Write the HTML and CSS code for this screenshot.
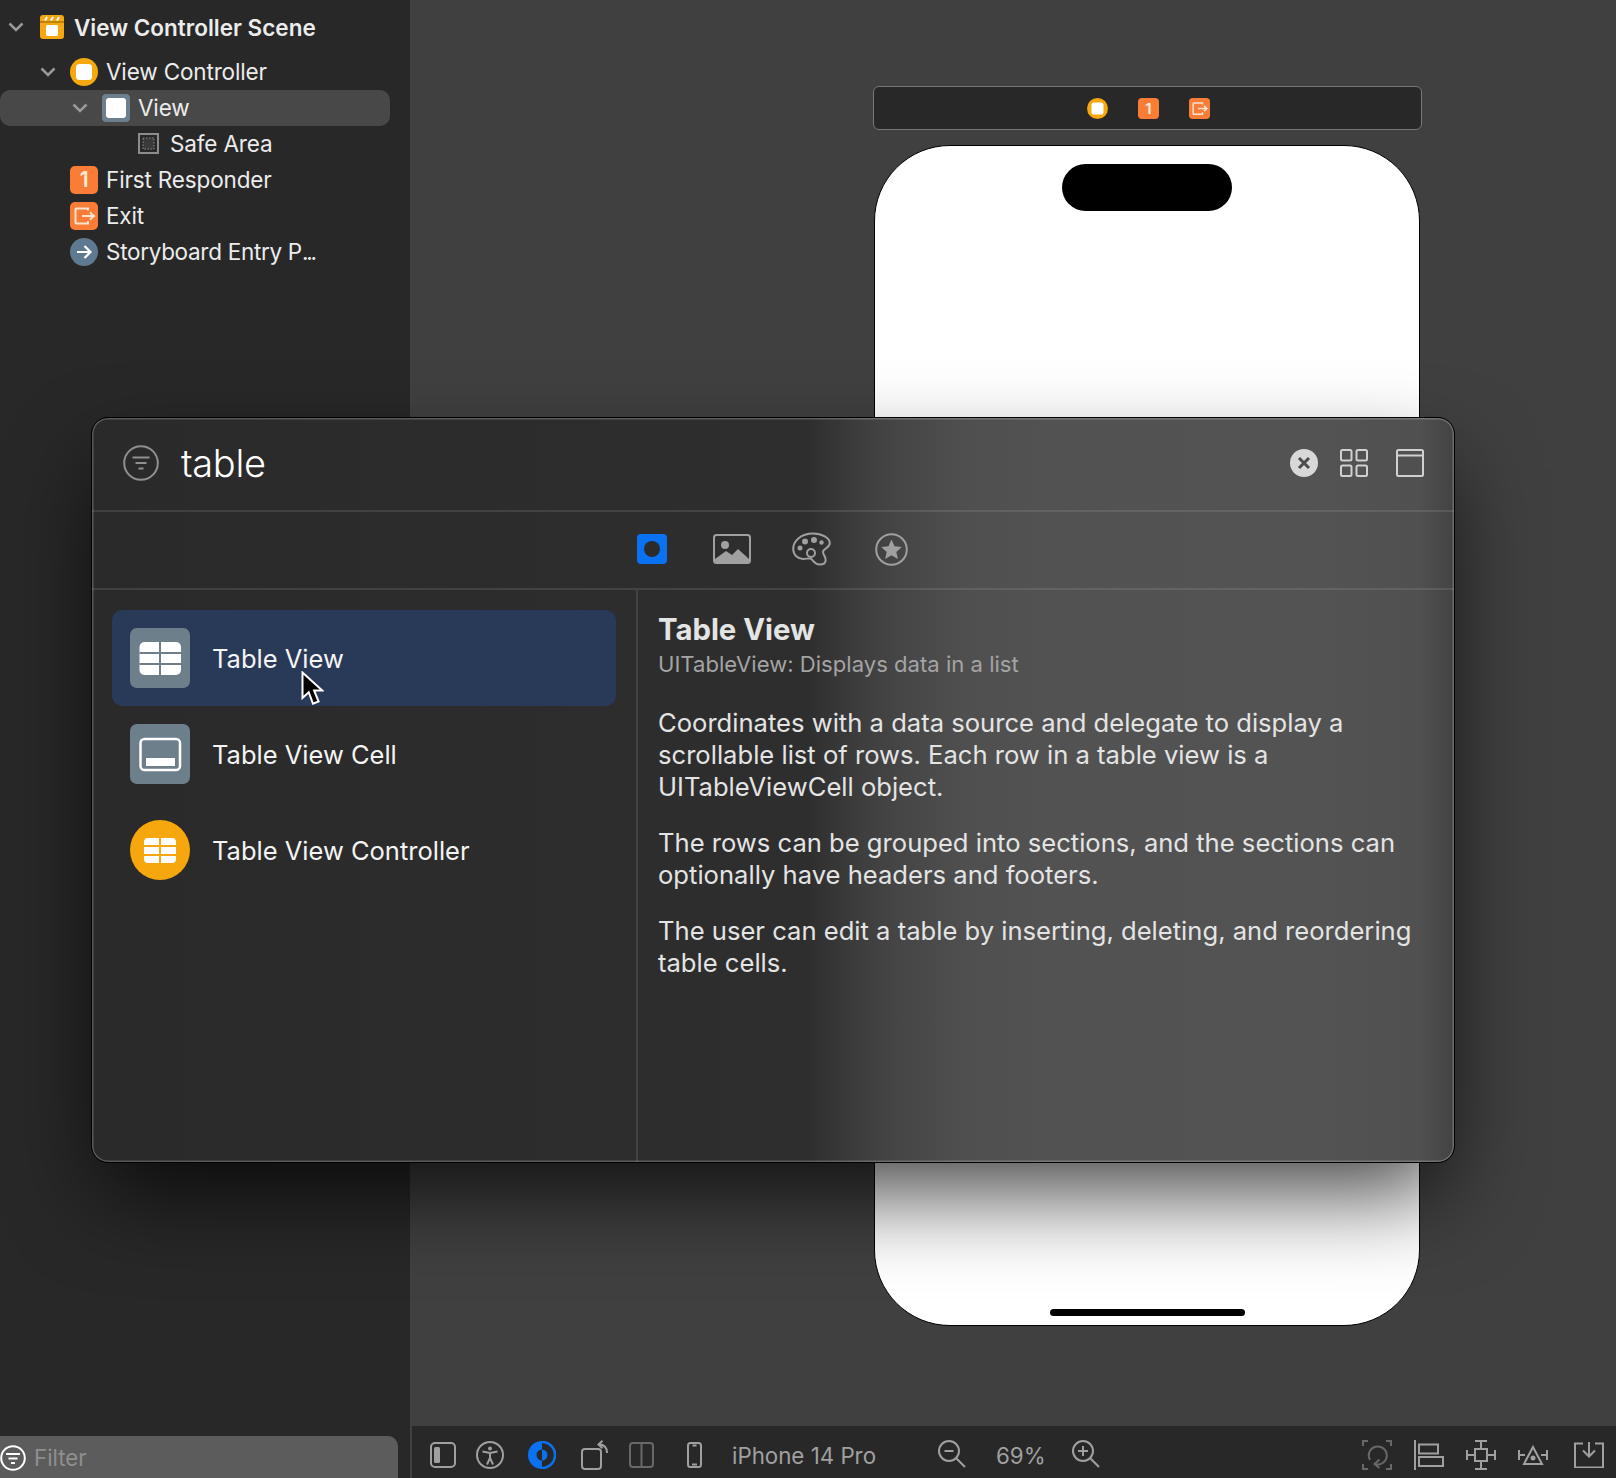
FILE: index.html
```html
<!DOCTYPE html>
<html lang="en">
<head>
    <meta charset="UTF-8">
    <title>Storyboard Library</title>
    <link rel="stylesheet" href="styles.css">
</head>
<body>
    <svg class="defs" width="0" height="0">
        <symbol id="vc" viewBox="0 0 28 28">
            <circle cx="14" cy="14" r="14" fill="#f5a80f"/>
            <rect x="6" y="6" width="16" height="16" rx="3.5" fill="#fff"/>
        </symbol>
        <symbol id="exit" viewBox="0 0 28 28">
            <rect width="28" height="28" rx="5" fill="#f97d36"/>
            <path d="M18 8.5V6.5H6.5a1 1 0 0 0-1 1v13a1 1 0 0 0 1 1H18v-2.500" fill="none" stroke="#fde3d2" stroke-width="2"/>
            <path d="M12 14h12M20 10.500l4 3.500-4 3.500" fill="none" stroke="#fde3d2" stroke-width="2"/>
        </symbol>
    </svg>

    <div class="page">
        <aside class="sidebar">
            <div class="tree">
                <div class="row row-scene">
                    <svg class="chev" viewBox="0 0 16 10"><path d="M1.500 1.500 8 8l6.500-6.500"/></svg>
                    <svg class="ico-scene" viewBox="0 0 24 24">
                        <rect width="24" height="24" rx="3" fill="#f5a80f"/>
                        <path d="M0 7h24" stroke="#8a5c00" stroke-width="1"/>
                        <path d="M5 5.500 7 2M11 5.500 13 2M17 5.500 19 2" stroke="#fff" stroke-width="2"/>
                        <rect x="6" y="10" width="12" height="11" rx="1.500" fill="#fff"/>
                    </svg>
                    <span class="scene-name">View Controller Scene</span>
                </div>
                <div class="row row-vc">
                    <svg class="chev" viewBox="0 0 16 10"><path d="M1.500 1.500 8 8l6.500-6.500"/></svg>
                    <svg class="ico"><use href="#vc"/></svg>
                    <span>View Controller</span>
                </div>
                <div class="row row-view selected">
                    <svg class="chev" viewBox="0 0 16 10"><path d="M1.500 1.500 8 8l6.500-6.500"/></svg>
                    <svg class="ico" viewBox="0 0 28 28">
                        <rect width="28" height="28" rx="4" fill="#6b7f8f"/>
                        <rect x="4" y="4" width="20" height="20" rx="3" fill="#fff"/>
                    </svg>
                    <span>View</span>
                </div>
                <div class="row row-safe">
                    <svg class="ico-safe" viewBox="0 0 21 21">
                        <rect x="1" y="1" width="19" height="19" fill="none" stroke="#8c8c8c" stroke-width="2"/>
                        <rect x="5" y="5" width="11" height="11" fill="#3a3a3a" stroke="#8c8c8c" stroke-dasharray="1.500 1.500"/>
                    </svg>
                    <span>Safe Area</span>
                </div>
                <div class="row row-top">
                    <div class="badge-one">1</div>
                    <span>First Responder</span>
                </div>
                <div class="row row-top">
                    <svg class="ico"><use href="#exit"/></svg>
                    <span>Exit</span>
                </div>
                <div class="row row-top">
                    <svg class="ico" viewBox="0 0 28 28">
                        <circle cx="14" cy="14" r="14" fill="#5f7a90"/>
                        <path d="M7 14h13M14.500 8l6 6-6 6" fill="none" stroke="#fff" stroke-width="2.200"/>
                    </svg>
                    <span class="entry-name">Storyboard Entry P<span class="dots">...</span></span>
                </div>
            </div>
            <div class="filter">
                <svg class="filter-ico" viewBox="0 0 26 26">
                    <circle cx="13" cy="13" r="11.800" fill="none" stroke="#fff" stroke-width="2"/>
                    <path d="M6 9h14M8.500 13.500h9M11 18h4" stroke="#fff" stroke-width="2"/>
                </svg>
                <span>Filter</span>
            </div>
        </aside>

        <main class="canvas">
            <div class="scene">
                <div class="scene-bar">
                    <svg class="mini"><use href="#vc"/></svg>
                    <div class="badge-one mini-one">1</div>
                    <svg class="mini"><use href="#exit"/></svg>
                </div>
                <div class="phone">
                    <div class="island"></div>
                    <div class="home-bar"></div>
                </div>
            </div>

            <div class="toolbar">
                <svg class="tool t-panel" viewBox="0 0 26 26">
                    <rect x="1" y="1" width="24" height="24" rx="4"/>
                    <rect class="fill" x="4" y="5" width="6" height="16" rx="1.500"/>
                </svg>
                <svg class="tool t-access" viewBox="0 0 28 28">
                    <circle cx="14" cy="14" r="13"/>
                    <circle class="fill" cx="14" cy="7.500" r="2"/>
                    <path d="M6.500 10.500 14 12l7.500-1.500M14 12v5M14 17l-3 6.500M14 17l3 6.500"/>
                </svg>
                <svg class="tool t-appear" viewBox="0 0 28 28">
                    <circle cx="14" cy="14" r="14" fill="#0a72f0" stroke="none"/>
                    <path d="M14 1a13 13 0 0 1 0 26z" fill="#282828" stroke="none"/>
                    <path d="M14 1a13 13 0 0 1 13 13 13 13 0 0 1-13 13" fill="none" stroke="#0a72f0" stroke-width="2.500"/>
                    <path d="M14 8.500a5.500 5.500 0 0 1 0 11z" fill="#0a72f0" stroke="none"/>
                    <path d="M14 8.500a5.500 5.500 0 0 0 0 11z" fill="#282828" stroke="none"/>
                </svg>
                <svg class="tool t-rotate" viewBox="0 0 27 30">
                    <rect x="1" y="9" width="19" height="20" rx="3"/>
                    <path d="M26 13C26 7 23 4.500 18 4.500M21.500 0.800 17.500 4.500l4 3.700"/>
                </svg>
                <svg class="tool t-split dim" viewBox="0 0 25 26">
                    <rect x="1" y="1" width="23" height="24" rx="3"/>
                    <path d="M12.500 1v24"/>
                </svg>
                <svg class="tool t-phone" viewBox="0 0 15 26">
                    <rect x="1" y="1" width="13" height="24" rx="2.500"/>
                    <path d="M5.500 3.500h4M5 22.500h5"/>
                </svg>
                <span class="tool-text t-device">iPhone 14 Pro</span>
                <svg class="tool t-zoomout" viewBox="0 0 28 28">
                    <circle cx="11" cy="11" r="10"/>
                    <path d="M18.500 18.500 27 27M6.500 11h9"/>
                </svg>
                <span class="tool-text t-percent">69%</span>
                <svg class="tool t-zoomin" viewBox="0 0 28 28">
                    <circle cx="11" cy="11" r="10"/>
                    <path d="M18.500 18.500 27 27M6 11h10M11 6v10"/>
                </svg>
                <div class="tool-right">
                    <svg class="tool dim" viewBox="0 0 30 30">
                        <path d="M1 6V1h5M24 1h5v5M1 24v5h5M29 24v5h-5"/>
                        <path d="M8 20A9 9 0 1 1 13 24M17.500 19.500 12.500 24l5 4"/>
                    </svg>
                    <svg class="tool" viewBox="0 0 30 30">
                        <path d="M1 0v30"/>
                        <rect x="5" y="4.500" width="19" height="9"/>
                        <rect x="5" y="17" width="24" height="9"/>
                    </svg>
                    <svg class="tool" viewBox="0 0 30 30">
                        <rect x="9" y="9" width="12" height="12"/>
                        <path d="M9 1h12M15 1v8M9 29h12M15 21v8M1 10v10M1 15h8M29 10v10M21 15h8"/>
                    </svg>
                    <svg class="tool" viewBox="0 0 30 30">
                        <path d="M15 7 24 24H6zM1 10v10M1 15h6M29 10v10M23 15h6"/>
                        <circle class="fill" cx="15" cy="18" r="2.500"/>
                    </svg>
                    <svg class="tool t-embed" viewBox="0 0 30 26">
                        <path d="M9 1.500H1v24h28v-24h-8M15 0v14M9 8.500l6 6 6-6"/>
                    </svg>
                </div>
            </div>
        </main>

        <!-- object library popup -->
        <section class="library">
            <header class="lib-search">
                <svg class="lib-filter" viewBox="0 0 36 36">
                    <circle cx="18" cy="18" r="16.800"/>
                    <path d="M9.500 12.500h17M12.500 18h11M15.500 23.500h5"/>
                </svg>
                <span class="lib-query">table</span>
                <svg class="lib-clear" viewBox="0 0 28 28">
                    <circle cx="14" cy="14" r="14" fill="#d8d8d8"/>
                    <path d="M9 9l10 10M19 9 9 19" stroke="#4c4c4c" stroke-width="3"/>
                </svg>
                <svg class="lib-view" viewBox="0 0 28 28">
                    <rect x="1" y="1" width="10.500" height="10.500" rx="1.500"/>
                    <rect x="16.500" y="1" width="10.500" height="10.500" rx="1.500"/>
                    <rect x="1" y="16.500" width="10.500" height="10.500" rx="1.500"/>
                    <rect x="16.500" y="16.500" width="10.500" height="10.500" rx="1.500"/>
                </svg>
                <svg class="lib-window" viewBox="0 0 28 28">
                    <rect x="1" y="1" width="26" height="26" rx="1.500"/>
                    <path d="M1 6.500h26"/>
                </svg>
            </header>

            <nav class="lib-tabs">
                <svg class="tab-objects" viewBox="0 0 30 30">
                    <rect width="30" height="30" rx="4" fill="#0a72f0"/>
                    <circle cx="15" cy="15" r="8" fill="#2b2b2b"/>
                </svg>
                <svg class="tab-media" viewBox="0 0 38 30">
                    <rect x="1" y="1" width="36" height="28" rx="2.500" fill="none" stroke="#a0a0a0" stroke-width="2"/>
                    <circle cx="12" cy="11" r="4" fill="#a0a0a0"/>
                    <path d="M2 28V25L13 17l6 4 6-6 11 10v3z" fill="#a0a0a0"/>
                </svg>
                <svg class="tab-colors" viewBox="0 0 40 34">
                    <path d="M21 1.500C9 1.500 1.200 9 1.200 17c0 6 4.800 10 10 10 3 0 5-1 7-.5 3 .6 3.500 6 9.500 6 3.500 0 6-1.500 6-4.500 0-4-2.700-5-2.700-8 0-4 6.800-3.500 6.800-9C37.800 6 30 1.500 21 1.500z" fill="none" stroke="#a0a0a0" stroke-width="2"/>
                    <circle cx="8" cy="16" r="2.500" fill="#a0a0a0"/>
                    <circle cx="13" cy="9.500" r="3" fill="#a0a0a0"/>
                    <circle cx="22" cy="8" r="3" fill="#a0a0a0"/>
                    <circle cx="29.500" cy="10.500" r="2.200" fill="#a0a0a0"/>
                    <circle cx="19" cy="21" r="4" fill="none" stroke="#a0a0a0" stroke-width="2"/>
                </svg>
                <svg class="tab-snippets" viewBox="0 0 33 33">
                    <circle cx="16.500" cy="16.500" r="15.300" fill="none" stroke="#a0a0a0" stroke-width="2"/>
                    <path d="M16.500 6.500l3 6.800 7.300.7-5.500 4.900 1.600 7.200-6.400-3.800-6.400 3.800 1.600-7.200-5.500-4.900 7.300-.7z" fill="#a0a0a0"/>
                </svg>
            </nav>

            <div class="lib-body">
                <div class="lib-list">
                    <div class="lib-item active">
                        <svg class="lib-ico" viewBox="0 0 60 60">
                            <rect width="60" height="60" rx="7" fill="#6e7f8c"/>
                            <rect x="9.500" y="14" width="41.500" height="33" rx="5" fill="#fff"/>
                            <path d="M30 14v33M9.500 25h41.500M9.500 36h41.500" stroke="#6e7f8c" stroke-width="2"/>
                        </svg>
                        <span>Table View</span>
                    </div>
                    <div class="lib-item">
                        <svg class="lib-ico" viewBox="0 0 60 60">
                            <rect width="60" height="60" rx="7" fill="#6e7f8c"/>
                            <rect x="10.500" y="15" width="39.500" height="31" rx="4" fill="none" stroke="#fff" stroke-width="2.500"/>
                            <rect x="16" y="34" width="29" height="8" fill="#fff"/>
                        </svg>
                        <span>Table View Cell</span>
                    </div>
                    <div class="lib-item">
                        <svg class="lib-ico" viewBox="0 0 60 60">
                            <circle cx="30" cy="30" r="30" fill="#f7a70e"/>
                            <rect x="14" y="18" width="32" height="25" rx="4" fill="#fff"/>
                            <path d="M30 18v25M14 26h32M14 35h32" stroke="#f7a70e" stroke-width="2"/>
                        </svg>
                        <span>Table View Controller</span>
                    </div>
                </div>
                <div class="lib-detail">
                    <h2>Table View</h2>
                    <div class="lib-sub">UITableView: Displays data in a list</div>
                    <p>Coordinates with a data source and delegate to display a scrollable list of rows. Each row in a table view is a UITableViewCell object.</p>
                    <p>The rows can be grouped into sections, and the sections can optionally have headers and footers.</p>
                    <p>The user can edit a table by inserting, deleting, and reordering table cells.</p>
                </div>
            </div>
        </section>

        <svg class="cursor" viewBox="0 0 23 36">
            <path d="M1.500 1.500V27l6.200-5.800 4.300 11.500 5.600-2.200-4.500-11h8.200z" fill="#000" stroke="#fff" stroke-width="2"/>
        </svg>
    </div>
</body>
</html>
```

FILE: styles.css
```css
* {
    box-sizing: border-box;
}
html, body {
    margin: 0;
    height: 100%;
}
body {
    font-family: Inter, "Liberation Sans", sans-serif;
    background: #404040;
    color: #ececec;
    overflow: hidden;
}
.defs {
    position: absolute;
}
.page {
    position: relative;
    display: flex;
    width: 1616px;
    height: 1478px;
    overflow: hidden;
}

/* left outline */
.sidebar {
    width: 410px;
    height: 100%;
    background: #282828;
    display: flex;
    flex-direction: column;
    flex-shrink: 0;
}
.tree {
    padding-top: 10px;
    flex: 1;
    font-size: 22.5px;
    letter-spacing: -0.15px;
}
.row {
    display: flex;
    align-items: center;
    height: 36px;
}
.row-scene {
    padding-left: 8px;
    margin-bottom: 7.5px;
    position: relative;
    top: -1px;
}
.row-vc {
    padding-left: 40px;
}
.row-view {
    padding-left: 72px;
}
.row-safe {
    padding-left: 138px;
}
.row-top {
    padding-left: 70px;
}
.selected {
    width: 390px;
    background: #484848;
    border-radius: 10px;
}
.chev {
    width: 16px;
    height: 10px;
    margin-right: 14px;
    fill: none;
    stroke: #9a9a9a;
    stroke-width: 2.500;
}
.row-scene .chev {
    margin-right: 16px;
}
.ico-scene {
    width: 24px;
    height: 24px;
    margin-right: 10px;
}
.scene-name {
    font-weight: 600;
    letter-spacing: 0;
}
.ico {
    width: 28px;
    height: 28px;
    margin-right: 8px;
}
.ico-safe {
    width: 21px;
    height: 21px;
    margin-right: 11px;
}
.entry-name {
    letter-spacing: -0.3px;
}
.dots {
    letter-spacing: -2.2px;
}
.badge-one {
    width: 28px;
    height: 28px;
    margin-right: 8px;
    background: #f97d36;
    border-radius: 5px;
    color: #fde9dc;
    font-size: 21px;
    font-weight: 600;
    line-height: 28px;
    text-align: center;
}
.filter {
    height: 42px;
    width: 398px;
    background: #5c5c5c;
    border-radius: 0 10px 0 0;
    display: flex;
    align-items: center;
    padding-top: 1px;
    color: #8f8f8f;
    font-size: 22.3px;
}
.filter-ico {
    width: 26px;
    height: 26px;
    margin-right: 8px;
}

/* canvas */
.canvas {
    flex: 1;
    display: flex;
    flex-direction: column;
    height: 100%;
}
.scene {
    margin: 86px 0 0 463px;
    width: 549px;
}
.scene-bar {
    height: 44px;
    background: #282828;
    border: 1.500px solid #787878;
    border-radius: 6px;
    display: flex;
    align-items: center;
    justify-content: center;
    gap: 30px;
    padding-left: 2px;
    margin-bottom: 15px;
}
.mini {
    width: 21px;
    height: 21px;
}
.mini-one {
    width: 21px;
    height: 21px;
    margin: 0;
    font-size: 15px;
    line-height: 21px;
    border-radius: 4px;
}
.phone {
    position: relative;
    margin-left: 1px;
    width: 546px;
    height: 1181px;
    background: #fff;
    border: 1.500px solid #000;
    border-radius: 76px;
}
.island {
    width: 170px;
    height: 47px;
    margin: 18px auto 0;
    background: #000;
    border-radius: 24px;
}
.home-bar {
    position: absolute;
    left: 175px;
    bottom: 9px;
    width: 195px;
    height: 7px;
    background: #000;
    border-radius: 4px;
}
.toolbar {
    margin-top: auto;
    margin-left: 2px;
    height: 52px;
    background: #282828;
    display: flex;
    align-items: center;
    padding: 6px 12px 0 18px;
}
.tool {
    width: 30px;
    height: 30px;
    fill: none;
    stroke: #a0a0a0;
    stroke-width: 2;
    flex-shrink: 0;
}
.tool .fill {
    fill: #a0a0a0;
    stroke: none;
}
.tool.dim {
    stroke: #686868;
}
.tool-text {
    color: #a0a0a0;
    font-size: 22.3px;
}
.t-panel {
    width: 26px;
    height: 26px;
}
.t-access {
    width: 28px;
    height: 28px;
    margin-left: 20px;
}
.t-appear {
    width: 28px;
    height: 28px;
    margin-left: 24px;
}
.t-rotate {
    width: 27px;
    margin-left: 25px;
}
.t-split {
    width: 25px;
    height: 26px;
    margin-left: 21px;
}
.t-phone {
    width: 15px;
    height: 26px;
    margin-left: 33px;
}
.t-device {
    margin-left: 30px;
    width: 144px;
    white-space: nowrap;
}
.t-zoomout {
    width: 28px;
    height: 28px;
    margin-left: 62px;
    margin-top: -2px;
}
.t-percent {
    margin-left: 30px;
    width: 48px;
}
.t-zoomin {
    width: 28px;
    height: 28px;
    margin-left: 28px;
    margin-top: -2px;
}
.tool-right {
    margin-left: auto;
    display: flex;
    gap: 22px;
}
.t-embed {
    margin-left: 4px;
    height: 26px;
    align-self: center;
}

/* library popup */
.library {
    position: absolute;
    left: 92px;
    top: 418px;
    width: 1362px;
    height: 744px;
    border-radius: 16px;
    display: flex;
    flex-direction: column;
    overflow: hidden;
    background: linear-gradient(90deg, #2a2a2a 0%, #2e2e2e 52.5%, #3e3e3e 56.5%, #454545 59%, #4f4f4f 64%, #525252 70%, #535353 90%, #505050 97.5%, #434343 100%);
    box-shadow: inset 0 0 0 1.500px rgba(255, 255, 255, 0.22), 0 40px 90px -10px rgba(0, 0, 0, 0.75);
    outline: 1px solid #000;
}
.lib-search {
    height: 94px;
    flex-shrink: 0;
    display: flex;
    align-items: center;
    padding: 0 30px 2px 31px;
    border-bottom: 2px solid rgba(255, 255, 255, 0.1);
}
.lib-filter {
    width: 36px;
    height: 36px;
    fill: none;
    stroke: #909090;
    stroke-width: 2;
    margin-right: 22px;
}
.lib-query {
    font-size: 38px;
    font-weight: 300;
    color: #fff;
    letter-spacing: -0.3px;
}
.lib-clear {
    width: 28px;
    height: 28px;
    margin-left: auto;
}
.lib-view, .lib-window {
    width: 28px;
    height: 28px;
    fill: none;
    stroke: #d0d0d0;
    stroke-width: 2;
    margin-left: 22px;
}
.lib-window {
    margin-left: 28px;
}
.lib-tabs {
    height: 78px;
    flex-shrink: 0;
    display: flex;
    align-items: center;
    padding: 0 0 2px 545px;
    border-bottom: 2px solid rgba(255, 255, 255, 0.1);
}
.tab-objects {
    width: 30px;
    height: 30px;
}
.tab-media {
    width: 38px;
    height: 30px;
    margin-left: 46px;
}
.tab-colors {
    width: 40px;
    height: 34px;
    margin-left: 41px;
}
.tab-snippets {
    width: 33px;
    height: 33px;
    margin-left: 43px;
}
.lib-body {
    flex: 1;
    display: flex;
    min-height: 0;
}
.lib-list {
    width: 546px;
    border-right: 2px solid rgba(255, 255, 255, 0.1);
    padding: 20px 0 0 20px;
    flex-shrink: 0;
}
.lib-item {
    width: 504px;
    height: 96px;
    display: flex;
    align-items: center;
    padding-left: 18px;
    border-radius: 10px;
    font-size: 25.5px;
    color: #f4f4f4;
}
.lib-item.active {
    background: #283a58;
}
.lib-ico {
    width: 60px;
    height: 60px;
    margin-right: 22px;
}
.lib-detail {
    padding: 20px 0 0 20px;
    font-size: 25.6px;
    line-height: 32px;
    color: #e4e4e4;
}
.lib-detail h2 {
    margin: 0;
    font-size: 29.3px;
    font-weight: 700;
    line-height: 39px;
}
.lib-sub {
    color: #a4a4a4;
    font-size: 22.1px;
    line-height: 30px;
}
.lib-detail p {
    margin: 0 0 24px;
    width: 760px;
}
.lib-sub + p {
    margin-top: 28px;
}
.cursor {
    position: absolute;
    left: 300.500px;
    top: 671px;
    width: 23px;
    height: 36px;
}
```
